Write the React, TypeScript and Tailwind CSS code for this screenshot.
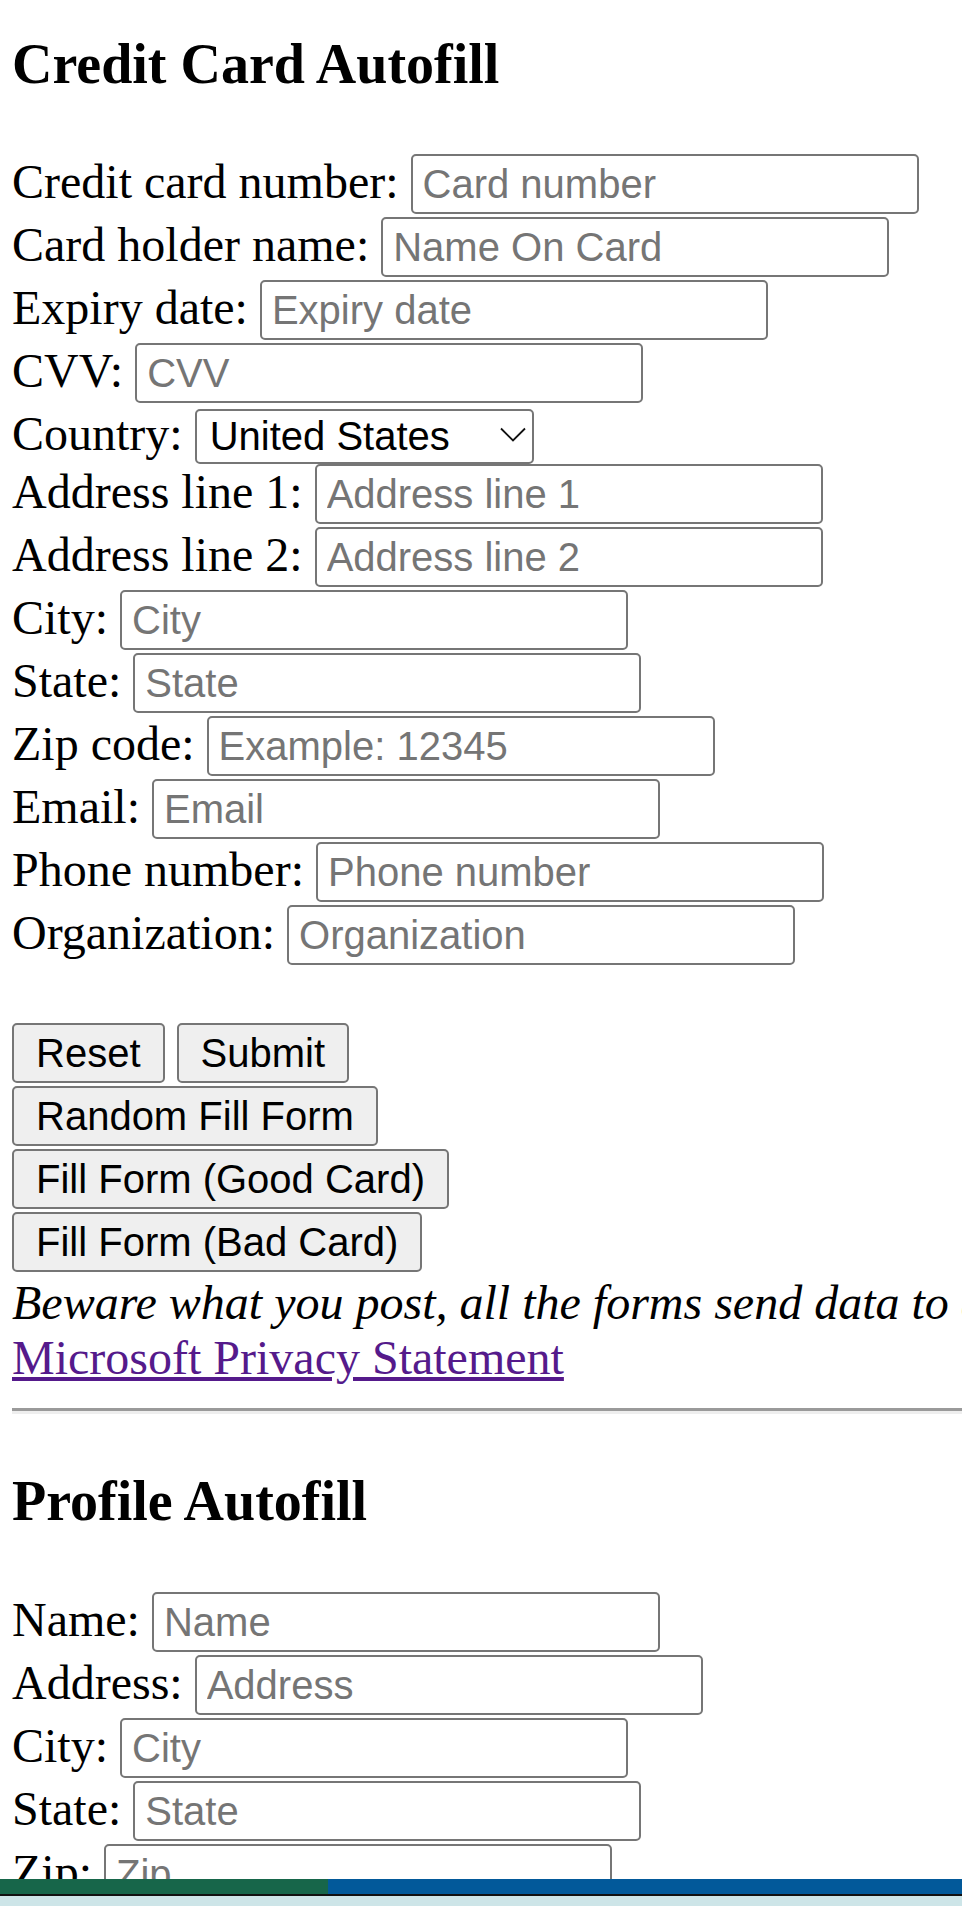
import React from 'react';

const serif = "[font-family:'Liberation_Serif','Times_New_Roman',serif]";
const sans = "[font-family:'Liberation_Sans',Arial,sans-serif]";

const cardFields: [string, string][] = [
  ['Credit card number:', 'Card number'],
  ['Card holder name:', 'Name On Card'],
  ['Expiry date:', 'Expiry date'],
  ['CVV:', 'CVV'],
];

const addressFields: [string, string][] = [
  ['Address line 1:', 'Address line 1'],
  ['Address line 2:', 'Address line 2'],
  ['City:', 'City'],
  ['State:', 'State'],
  ['Zip code:', 'Example: 12345'],
  ['Email:', 'Email'],
  ['Phone number:', 'Phone number'],
  ['Organization:', 'Organization'],
];

const profileFields: [string, string][] = [
  ['Name:', 'Name'],
  ['Address:', 'Address'],
  ['City:', 'City'],
  ['State:', 'State'],
  ['Zip:', 'Zip'],
];

const Field = ({ label, placeholder }: { label: string; placeholder: string }) => (
  <div className="flex h-[63px] shrink-0 items-baseline whitespace-nowrap">
    <span className="leading-[48px]">{label}</span>
    <input
      type="text"
      placeholder={placeholder}
      className={`ml-[12px] h-[60px] w-[508px] shrink-0 rounded-[5px] border-2 border-[#767676] bg-white px-[10px] text-[40px] leading-[46px] text-black outline-none placeholder:text-[#757575] ${sans}`}
    />
  </div>
);

const Btn = ({ children, className = '' }: { children: React.ReactNode; className?: string }) => (
  <button
    type="button"
    className={`h-[60px] shrink-0 rounded-[5px] border-2 border-[#767676] bg-[#efefef] px-[22px] text-[40px] leading-[46px] text-black ${sans} ${className}`}
  >
    {children}
  </button>
);

export default function App() {
  return (
    <div className="flex h-[1906px] w-[962px] flex-col overflow-hidden bg-white">
      {/* page content, cut off by the taskbar */}
      <div className={`h-[1879px] shrink-0 overflow-hidden pl-[12px] text-[48px] leading-[55px] text-black ${serif}`}>
        <h3 className="mt-[32px] mb-[58px] text-[56px] font-bold leading-[64px]">Credit Card Autofill</h3>

        <form className="flex flex-col">
          {cardFields.map(([l, p]) => (
            <Field key={l} label={l} placeholder={p} />
          ))}

          <div className="flex h-[58px] shrink-0 items-baseline whitespace-nowrap">
            <span className="leading-[48px]">Country:</span>
            <div className="relative ml-[12px] shrink-0">
              <select
                defaultValue="US"
                className={`h-[55px] w-[339px] appearance-none rounded-[5px] border-2 border-[#767676] bg-white pl-[13px] text-[40px] leading-[46px] text-black outline-none ${sans}`}
              >
                <option value="US">United States</option>
                <option value="CA">Canada</option>
                <option value="GB">United Kingdom</option>
              </select>
              <svg
                className="pointer-events-none absolute right-[8px] top-[21px]"
                width="26"
                height="15"
                viewBox="0 0 26 15"
                fill="none"
              >
                <path d="M1 1.5 L13 13.5 L25 1.5" stroke="#111" strokeWidth="1.8" />
              </svg>
            </div>
          </div>

          {addressFields.map(([l, p]) => (
            <Field key={l} label={l} placeholder={p} />
          ))}

          <div className="mt-[55px] flex h-[63px] shrink-0 items-start">
            <Btn>Reset</Btn>
            <Btn className="ml-[12px]">Submit</Btn>
          </div>
          <div className="flex h-[63px] shrink-0 items-start">
            <Btn>Random Fill Form</Btn>
          </div>
          <div className="flex h-[63px] shrink-0 items-start">
            <Btn>Fill Form (Good Card)</Btn>
          </div>
          <div className="flex h-[63px] shrink-0 items-start">
            <Btn>Fill Form (Bad Card)</Btn>
          </div>
        </form>

        <p className="whitespace-nowrap italic leading-[55px]">
          Beware what you post, all the forms send data to a server that echoes it back.
        </p>
        <a href="#" className="block w-fit leading-[55px] text-[#551a8b] underline">
          Microsoft Privacy Statement
        </a>

        <div className="mt-[23px] h-[6px] border-t-[3px] border-b-[3px] border-t-[#9a9a9a] border-b-[#eeeeee]" />

        <h3 className="mt-[55px] mb-[59px] text-[56px] font-bold leading-[64px]">Profile Autofill</h3>

        <form className="flex flex-col">
          {profileFields.map(([l, p]) => (
            <Field key={l} label={l} placeholder={p} />
          ))}
        </form>
      </div>

      {/* taskbar strip at the bottom */}
      <div className="flex h-[15px] shrink-0">
        <div className="w-[328px] bg-[#17664a]" />
        <div className="flex-1 bg-[#02599a]" />
      </div>
      <div className="h-[2px] shrink-0 bg-[#111111]" />
      <div className="flex-1 bg-[#cde5e8]" />
    </div>
  );
}
